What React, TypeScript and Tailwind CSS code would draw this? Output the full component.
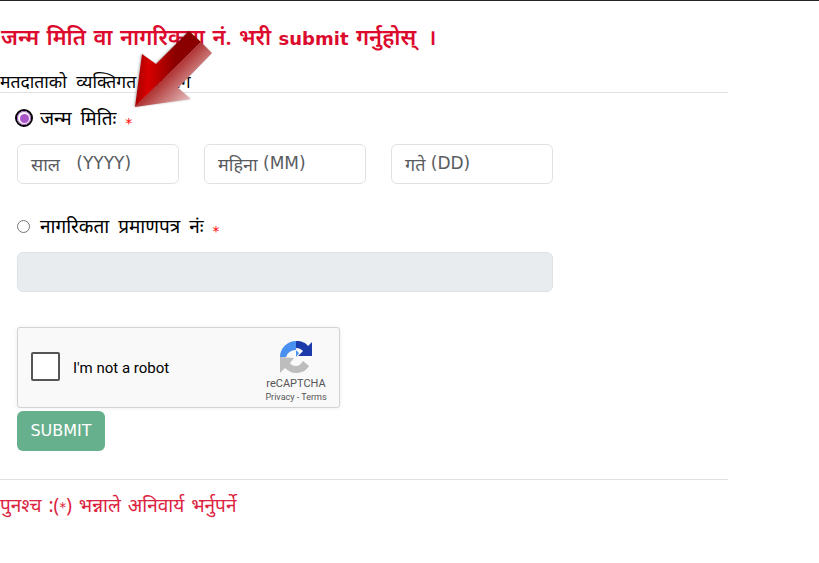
export default function App() {
  const fields = [
    ["साल", "   (YYYY)"],
    ["महिना", " (MM)"],
    ["गते", " (DD)"],
  ];
  return (
    <div className="relative h-[563px] w-[819px] overflow-hidden border-t border-[#212529] bg-white font-['Noto_Sans','DejaVu_Sans',sans-serif] text-[#212529]">
      <div className="w-[728px]">
        <h1 className="mt-[20px] h-[30px] whitespace-pre pl-[1px] text-[22px] font-semibold leading-[30px] text-[#dc0a2d] [word-spacing:1.7px]">जन्म मिति वा नागरिकता नं. भरी <span className="font-['DejaVu_Sans',sans-serif] text-[18px] font-bold">submit</span> गर्नुहोस् <span className="ml-[4px]">।</span></h1>
        <div className="mt-[20px] h-[22px] border-b border-[#dee2e6] text-[17.5px] leading-[20px] text-black [word-spacing:5px]">मतदाताको व्यक्तिगत <span className="ml-[4px]">विभाग</span></div>
        <div className="pl-[17px]">
          <label className="mt-[13px] -ml-[2px] flex h-[24px] items-center text-[19px] text-black [word-spacing:4px]">
            <span className="mr-[7px] flex h-[18px] w-[18px] items-center justify-center rounded-full border-2 border-black bg-white"><span className="flex h-[14px] w-[14px] items-center justify-center rounded-full border border-[#a855c8]"><span className="h-[9px] w-[9px] rounded-full bg-[#a855c8]"></span></span></span>
            जन्म मितिः <span className="ml-[9px] mt-[10px] font-['DejaVu_Sans',sans-serif] text-[14px] leading-[14px] text-[#ff0000]">*</span>
          </label>
          <div className="mt-[14px] flex w-[536px] gap-[25px]">
            {fields.map(([a, b]) => (
              <div key={a} className="flex h-[40px] flex-1 items-center whitespace-pre rounded-[6px] border border-[#dee2e6] bg-white px-[13px] text-[18px] text-[#595c5f]">{a}<span className="font-['DejaVu_Sans',sans-serif] text-[17px]">{b}</span></div>
            ))}
          </div>
          <label className="mt-[30px] flex h-[24px] items-center text-[19px] leading-[24px] text-black [word-spacing:4px]">
            <span className="mr-[10px] h-[13px] w-[13px] rounded-full border border-[#767676] bg-white"></span>
            नागरिकता प्रमाणपत्र नंः <span className="ml-[9px] mt-[10px] font-['DejaVu_Sans',sans-serif] text-[14px] leading-[14px] text-[#ff0000]">*</span>
          </label>
          <div className="mt-[14px] h-[40px] w-[536px] rounded-[6px] border border-[#dee2e6] bg-[#e9ecef]"></div>
          <div className="mt-[35px] flex h-[81px] w-[323px] items-center rounded-[3px] border border-[#d3d3d3] bg-[#f9f9f9] pl-[13px] pr-[12px] shadow-[0_0_4px_rgba(0,0,0,0.08)]">
            <span className="mb-[3px] h-[29px] w-[29px] rounded-[2px] border-2 border-[#555] bg-white"></span>
            <span className="ml-[13px] mt-[2px] font-['Roboto',sans-serif] text-[15px] text-black">I'm not a robot</span>
            <div className="ml-auto mt-[9px] flex w-[62px] flex-col items-center">
              <svg viewBox="0 0 32 32" className="h-[32px] w-[32px]">
                <path d="M16 0 A16 16 0 0 0 0 16 L6 16 A10 10 0 0 1 16 9 L19 12 L16 16 Z" fill="#4a90f0" />
                <path d="M16 0 C22 0 26 2 28 5 L32 1 L32 15 L18 15 L23 10 C21 8 19 7 16 7 Z" fill="#1c3aa9" />
                <path d="M0 16 L0 32 L5 27 C8 30 12 32 16 32 C21 32 26 30 29 25 L23 20 C21 23 19 25 16 25 C13 25 11 24 10 22 L14 17 Z" fill="#bdbdbd" />
              </svg>
              <span className="mt-[4px] font-['Roboto',sans-serif] text-[11px] leading-[14px] text-[#555]">reCAPTCHA</span>
              <span className="whitespace-nowrap font-['Roboto',sans-serif] text-[9px] leading-[12px] text-[#555]">Privacy - Terms</span>
            </div>
          </div>
          <button className="mt-[3px] flex h-[40px] w-[88px] items-center justify-center rounded-[6px] bg-[#67b08e] font-['DejaVu_Sans',sans-serif] text-[16px] text-white">SUBMIT</button>
        </div>
        <div className="mt-[28px] border-t border-[#dee2e6] pt-[12px] text-[19px] leading-[26px] text-[#dc2340] [word-spacing:2px]">पुनश्च :(<span className="font-['DejaVu_Sans',sans-serif] text-[14px]">*</span>) भन्नाले अनिवार्य भर्नुपर्ने</div>
      </div>
      <svg className="absolute left-[125px] top-[20px] h-[100px] w-[100px] drop-shadow-[-1px_0px_1px_rgba(0,0,0,0.3)]" viewBox="125 20 100 100">
        <defs>
          <linearGradient id="aL" gradientUnits="userSpaceOnUse" x1="135" y1="60" x2="175" y2="62"><stop offset="0" stopColor="#a00000" /><stop offset="0.35" stopColor="#d80000" /><stop offset="1" stopColor="#8a0000" /></linearGradient>
          <linearGradient id="aR" gradientUnits="userSpaceOnUse" x1="165" y1="70" x2="195" y2="100"><stop offset="0" stopColor="#a82020" /><stop offset="1" stopColor="#ecd0d0" /></linearGradient>
        </defs>
        <polygon points="135,106 142,53 156,63 189,30 201,41" fill="url(#aL)" />
        <polygon points="135,106 201,41 212,52 178,87 191,98" fill="url(#aR)" />
      </svg>
    </div>
  );
}
